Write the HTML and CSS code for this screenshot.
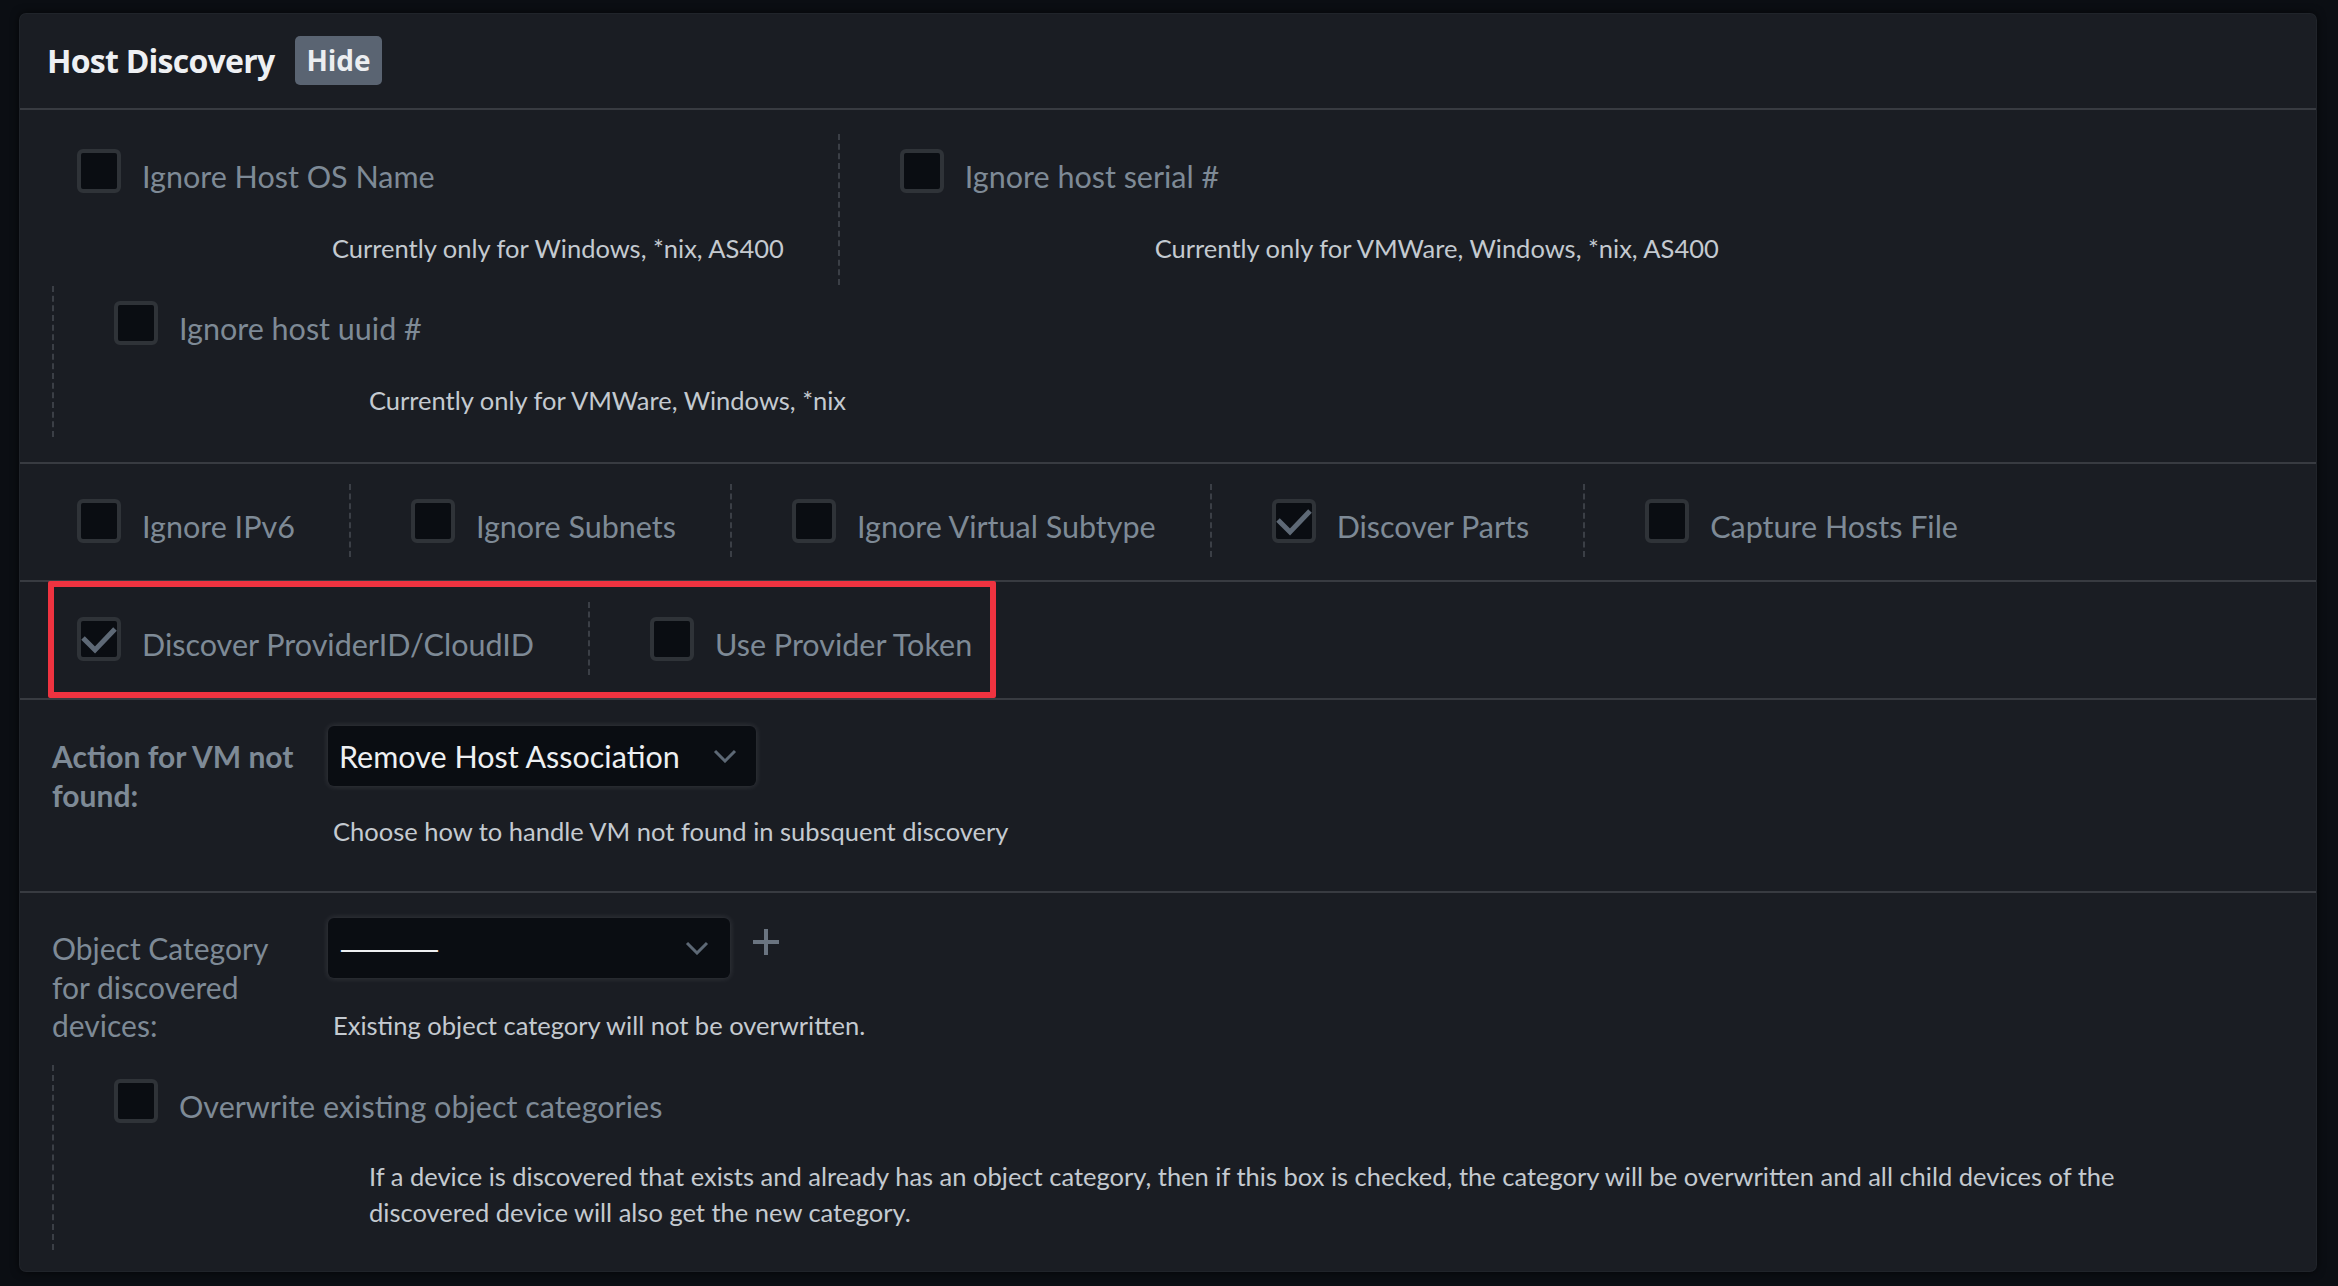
FILE: index.html
```html
<!DOCTYPE html>
<html lang="en">
<head>
<meta charset="utf-8">
<title>Host Discovery</title>
<link rel="stylesheet" href="styles.css">
</head>
<body>
<div class="panel">
  <div class="header">
    <h2 class="title">Host Discovery</h2>
    <span class="badge">Hide</span>
  </div>

  <div class="section sec-first">
    <div class="row">
      <div class="item">
        <div class="check-row"><span class="box"></span><span class="label">Ignore Host OS Name</span></div>
        <div class="desc">Currently only for Windows, *nix, AS400</div>
      </div>
      <div class="item">
        <div class="check-row"><span class="box"></span><span class="label">Ignore host serial #</span></div>
        <div class="desc">Currently only for VMWare, Windows, *nix, AS400</div>
      </div>
    </div>
    <div class="item sub">
      <div class="check-row"><span class="box"></span><span class="label">Ignore host uuid #</span></div>
      <div class="desc">Currently only for VMWare, Windows, *nix</div>
    </div>
  </div>

  <div class="section sec-inline">
    <div class="row">
      <div class="item"><div class="check-row"><span class="box"></span><span class="label">Ignore IPv6</span></div></div>
      <div class="item"><div class="check-row"><span class="box"></span><span class="label">Ignore Subnets</span></div></div>
      <div class="item"><div class="check-row"><span class="box"></span><span class="label">Ignore Virtual Subtype</span></div></div>
      <div class="item"><div class="check-row"><span class="box checked"><svg viewBox="0 0 44 44" class="tick"><polyline points="6,21 18,33 38,12"/></svg></span><span class="label">Discover Parts</span></div></div>
      <div class="item"><div class="check-row"><span class="box"></span><span class="label">Capture Hosts File</span></div></div>
    </div>
  </div>

  <div class="section sec-inline sec-marked">
    <div class="row">
      <div class="item"><div class="check-row"><span class="box checked"><svg viewBox="0 0 44 44" class="tick"><polyline points="6,21 18,33 38,12"/></svg></span><span class="label">Discover ProviderID/CloudID</span></div></div>
      <div class="item"><div class="check-row"><span class="box"></span><span class="label">Use Provider Token</span></div></div>
    </div>
    <div class="highlight"></div>
  </div>

  <div class="section sec-field">
    <div class="field">
      <div class="flabel strong">Action for VM not found:</div>
      <div class="select sel-action">
        <span class="sel-text">Remove Host Association</span>
        <svg class="chev" viewBox="0 0 24 14"><polyline points="2,2 12,12 22,2"/></svg>
      </div>
      <div class="fdesc">Choose how to handle VM not found in subsquent discovery</div>
    </div>
  </div>

  <div class="section sec-field sec-last">
    <div class="field">
      <div class="flabel">Object Category for discovered devices:</div>
      <div class="select-wrap">
        <div class="select sel-cat">
          <span class="sel-text dashes">—————</span>
          <svg class="chev" viewBox="0 0 24 14"><polyline points="2,2 12,12 22,2"/></svg>
        </div>
        <svg class="plus" viewBox="0 0 28 28"><line x1="14" y1="1" x2="14" y2="27"/><line x1="1" y1="14" x2="27" y2="14"/></svg>
      </div>
      <div class="fdesc">Existing object category will not be overwritten.</div>
    </div>
    <div class="item sub sub-last">
      <div class="check-row"><span class="box"></span><span class="label">Overwrite existing object categories</span></div>
      <div class="desc wide">If a device is discovered that exists and already has an object category, then if this box is checked, the category will be overwritten and all child devices of the discovered device will also get the new category.</div>
    </div>
  </div>
</div>
</body>
</html>
```

FILE: styles.css
```css
* { box-sizing: border-box; }

html, body {
  margin: 0;
  padding: 0;
  background: #0b0e13;
}

body {
  padding: 14px 22px 15px 20px;
  font-family: "Lato", "Liberation Sans", sans-serif;
}

.panel {
  background: #1a1d23;
  border-radius: 6px;
  box-shadow: 0 0 0 1px #20242a, 0 0 10px rgba(0, 0, 0, 0.8);
}

.header {
  height: 96px;
  display: flex;
  align-items: center;
  padding-left: 27px;
  padding-bottom: 2px;
  border-bottom: 2px solid #383b41;
}

.title {
  margin: 0;
  font-family: "Open Sans", "Liberation Sans", sans-serif;
  font-weight: 700;
  font-size: 32px;
  letter-spacing: -0.75px;
  color: #eef0f3;
}

.badge {
  margin-left: 21px;
  height: 49px;
  line-height: 49px;
  padding: 0 11px;
  border-radius: 5px;
  background: #5a6472;
  color: #eceef1;
  font-family: "Open Sans", "Liberation Sans", sans-serif;
  font-weight: 700;
  font-size: 28px;
}

.section {
  border-bottom: 2px solid #383b41;
}

.row {
  display: flex;
}

.item {
  display: flex;
  flex-direction: column;
  align-items: flex-start;
  padding: 15px 54px 0 60px;
  border-left: 2px dashed #3b3f46;
}

.row > .item:first-child {
  border-left: none;
  padding-left: 57px;
}

.check-row {
  display: flex;
  align-items: flex-start;
  gap: 21px;
}

.box {
  flex: none;
  width: 44px;
  height: 44px;
  border: 4px solid #2f3338;
  border-radius: 6px;
  background: #0a0d12;
  position: relative;
}

.tick {
  position: absolute;
  left: -4px;
  top: -4px;
  width: 44px;
  height: 44px;
}

.tick polyline {
  fill: none;
  stroke: #5e6976;
  stroke-width: 5;
}

.label {
  margin-top: 5px;
  line-height: 44px;
  font-size: 30.5px;
  color: #7e8a96;
  white-space: nowrap;
}

.desc {
  margin-top: 32px;
  margin-left: 255px;
  line-height: 36px;
  font-size: 25.5px;
  color: #c4cad0;
}

/* first section */
.sec-first {
  padding: 24px 0 25px 0;
}

.sec-first .item {
  padding-bottom: 19px;
}

.sub {
  margin-left: 32px;
  margin-top: 1px;
}

/* inline checkbox rows */
.sec-inline {
  padding: 20px 0 23px 0;
}

.sec-inline .item {
  height: 73px;
}

.sec-marked {
  position: relative;
}

.highlight {
  position: absolute;
  left: 28px;
  top: -1px;
  width: 948px;
  height: 117px;
  border: 6px solid #ef3340;
  border-radius: 2px;
  pointer-events: none;
}

/* form fields */
.sec-field {
  padding: 26px 0 42px 32px;
}

.field {
  display: grid;
  grid-template-columns: 250px auto;
  column-gap: 26px;
  row-gap: 27px;
  justify-content: start;
}

.flabel {
  grid-row: 1 / span 2;
  margin-top: 11px;
  font-size: 30px;
  line-height: 38.5px;
  color: #7e8a96;
}

.flabel.strong {
  font-weight: 700;
}

.select {
  height: 60px;
  display: flex;
  align-items: center;
  justify-content: space-between;
  padding: 0 19px 0 11px;
  background: #0a0d12;
  border-radius: 6px;
  box-shadow: 0 0 6px rgba(255, 255, 255, 0.14);
}

.sel-action {
  width: 428px;
}

.sel-cat {
  width: 402px;
  padding-right: 21px;
}

.sel-text {
  font-size: 30.5px;
  color: #eef0f2;
  white-space: nowrap;
}

.sel-text.dashes {
  letter-spacing: -5px;
}

.chev {
  width: 24px;
  height: 14px;
}

.chev polyline {
  fill: none;
  stroke: #5d6875;
  stroke-width: 3;
}

.fdesc {
  grid-column: 2;
  margin-left: 5px;
  line-height: 36px;
  font-size: 25.5px;
  color: #c4cad0;
  white-space: nowrap;
}

.select-wrap {
  display: flex;
  align-items: flex-start;
}

.plus {
  width: 28px;
  height: 28px;
  margin-left: 22px;
  margin-top: 10px;
}

.plus line {
  stroke: #6a7480;
  stroke-width: 4;
}

.sec-last {
  border-bottom: none;
  padding: 25px 0 21px 32px;
}

.sec-last .sub {
  margin-left: 0;
  margin-top: 20px;
  padding-top: 14px;
  padding-bottom: 20px;
}

.sub-last .desc {
  margin-top: 30px;
}

.desc.wide {
  max-width: 1850px;
}
```
